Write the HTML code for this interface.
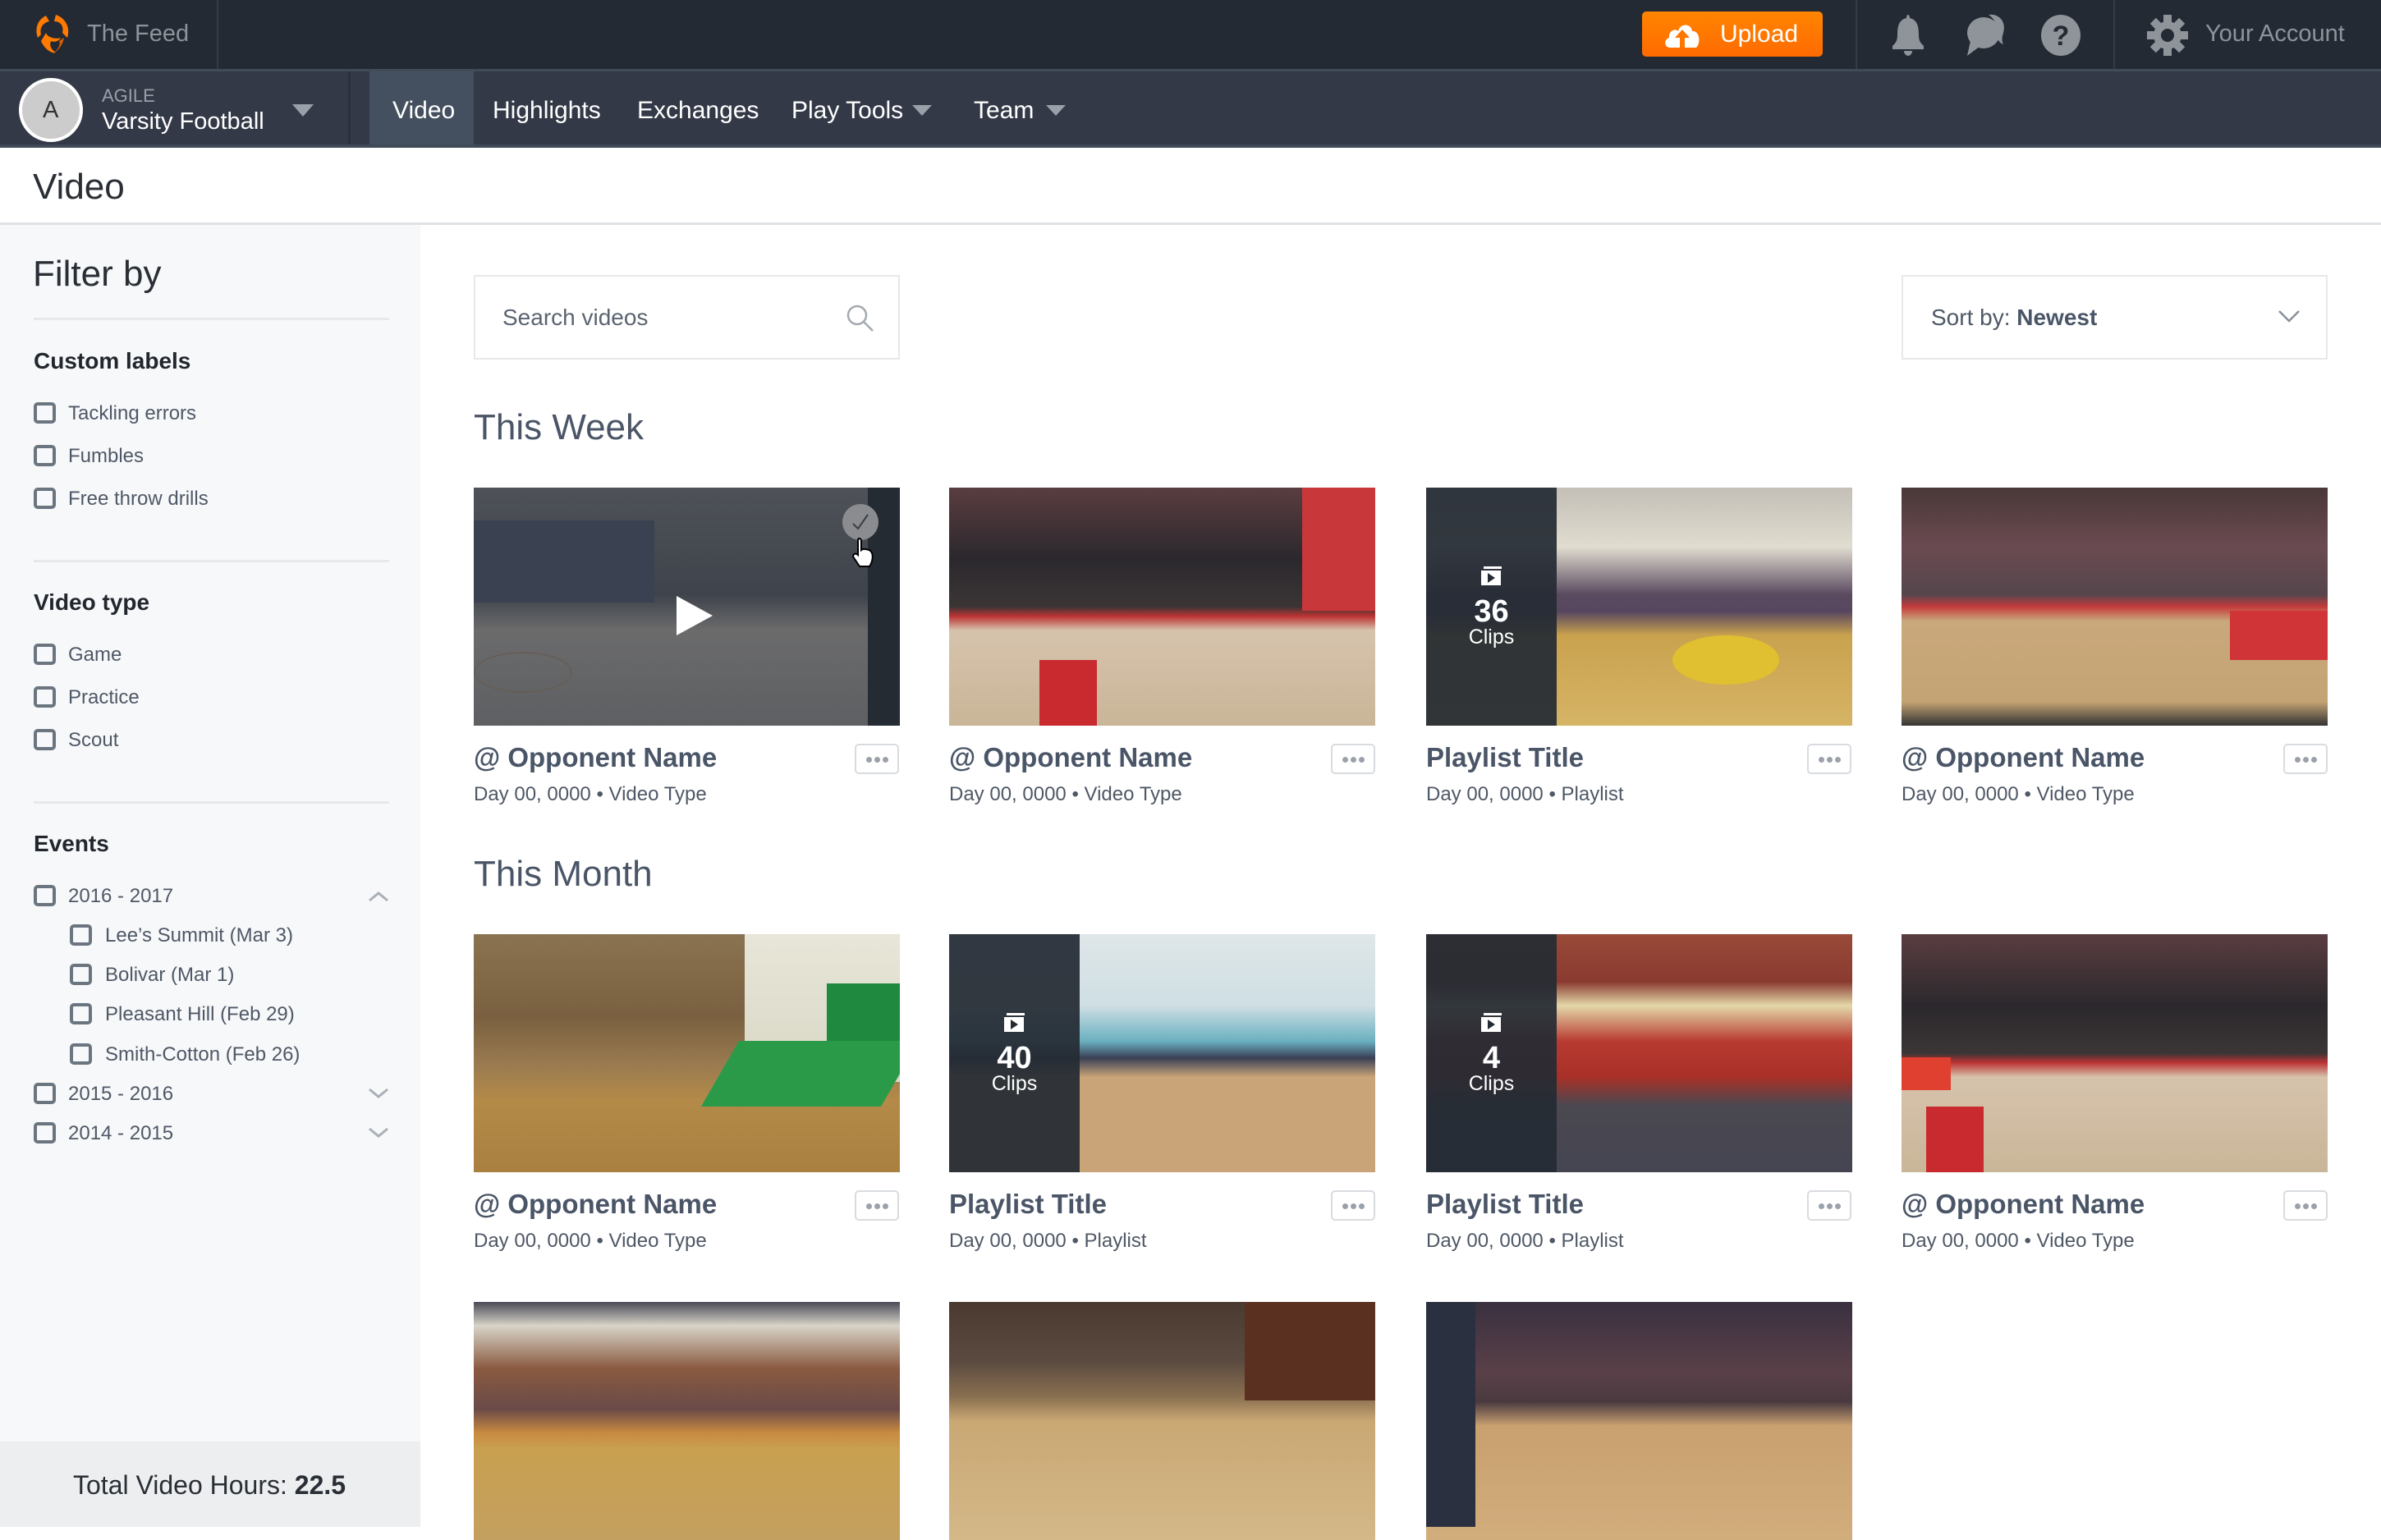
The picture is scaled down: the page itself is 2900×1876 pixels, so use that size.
<!DOCTYPE html>
<html><head><meta charset="utf-8">
<style>
*{margin:0;padding:0;box-sizing:border-box}
body{width:2900px;height:1860px;overflow:hidden;background:#fff;font-family:"Liberation Sans",Arial,sans-serif;position:relative}
.a{position:absolute}
.t{position:absolute;white-space:nowrap;line-height:1}
.top{left:0;top:0;width:2900px;height:84px;background:#242a33}
.nav{left:0;top:84px;width:2900px;height:96px;background:#333947;border-top:3px solid #414b58;border-bottom:4px solid #414b58}
.side{left:0;top:274px;width:512px;height:1586px;background:#f7f8fa}
.cb{position:absolute;width:27px;height:26px;border:4px solid #6b7580;border-radius:5px}
.lbl{font-size:24px;color:#4f5866}
.hr{position:absolute;left:41px;width:433px;height:3px;background:#e6e8eb}
.h{font-size:28px;font-weight:bold;color:#22272e}
.thumb{position:absolute;width:519px;height:290px;overflow:hidden}
.pl{position:absolute;left:0;top:0;width:159px;height:290px;background:rgba(37,43,52,.93);color:#fff;text-align:center}
.title{font-size:33px;font-weight:bold;color:#4a5567}
.sub{font-size:24px;color:#4f5866}
.dots{position:absolute;width:54px;height:37px;border:2px solid #d8dbdf;border-radius:5px;background:#fff}
.dots i{position:absolute;top:14px;width:7px;height:7px;border-radius:50%;background:#9aa1aa}
.sec{font-size:44px;color:#4a5567}
</style></head><body>

<div class="a top"></div>
<div class="a" style="left:264px;top:0;width:2px;height:84px;background:#343b46"></div>
<div class="a" style="left:2260px;top:0;width:2px;height:84px;background:#343b46"></div>
<div class="a" style="left:2574px;top:0;width:2px;height:84px;background:#343b46"></div>
<!-- logo -->
<svg class="a" style="left:38px;top:16px" width="52" height="52" viewBox="0 0 52 52">
<path d="M18 3 C8 8 4 18 8 30 L12 26 C10 18 14 12 22 10 Z" fill="#ff7a00"/>
<path d="M30 2 C42 6 48 18 44 30 L38 24 C40 16 36 10 28 10 Z" fill="#ff7a00"/>
<path d="M12 34 C16 44 26 50 30 48 C24 44 22 40 24 34 C28 36 34 34 36 30 C30 32 20 30 18 24 Z" fill="#ff7a00"/>
<path d="M40 30 C38 40 32 46 28 48 C34 42 36 38 34 34 Z" fill="#d85e00"/>
</svg>
<div class="t" style="left:106px;top:27px;font-size:29px;color:#8e939b">The Feed</div>

<!-- upload -->
<div class="a" style="left:2000px;top:14px;width:220px;height:55px;border-radius:5px;background:linear-gradient(#ff8500,#ff6a00)"></div>
<svg class="a" style="left:2026px;top:22px" width="46" height="38" viewBox="0 0 46 38">
<path d="M8 36 C1 36 0 26 7 24 C6 16 14 12 18 16 C20 6 34 6 35 16 C44 15 46 30 40 36 Z" fill="#fff"/>
<path d="M23 14 L14 24 H20 V36 H26 V24 H32 Z" fill="#ff7600"/>
</svg>
<div class="t" style="left:2095px;top:27px;font-size:30px;color:#fff">Upload</div>
<!-- bell -->
<svg class="a" style="left:2301px;top:16px" width="46" height="52" viewBox="0 0 46 52">
<path d="M23 2 C25 2 25 6 25 6 C34 8 36 16 36 26 C36 34 38 36 42 40 L42 44 H4 L4 40 C8 36 10 34 10 26 C10 16 12 8 21 6 C21 6 21 2 23 2 Z" fill="#8f949b"/>
<path d="M18 46 H28 C28 50 25 52 23 52 C21 52 18 50 18 46 Z" fill="#8f949b"/>
</svg>
<!-- chat -->
<svg class="a" style="left:2392px;top:16px" width="56" height="52" viewBox="0 0 56 52">
<path d="M30 2 C42 0 52 10 48 24 C46 30 46 34 48 38 C42 36 40 30 40 24 C42 14 36 6 30 2 Z" fill="#8f949b"/>
<ellipse cx="24" cy="24" rx="20" ry="19" fill="#8f949b"/>
<path d="M8 34 L4 52 L20 40 Z" fill="#8f949b"/>
</svg>
<!-- help -->
<svg class="a" style="left:2484px;top:17px" width="52" height="52" viewBox="0 0 52 52">
<ellipse cx="26" cy="26" rx="24" ry="25" fill="#8f949b"/>
<text x="26" y="38" text-anchor="middle" font-family="Liberation Sans" font-weight="bold" font-size="34" fill="#242a33">?</text>
</svg>
<!-- gear -->
<svg class="a" style="left:2614px;top:17px" width="52" height="52" viewBox="0 0 52 52">
<g fill="#8f949b">
<circle cx="26" cy="26" r="17"/>
<rect x="21" y="1" width="10" height="50"/>
<rect x="21" y="1" width="10" height="50" transform="rotate(45 26 26)"/>
<rect x="21" y="1" width="10" height="50" transform="rotate(90 26 26)"/>
<rect x="21" y="1" width="10" height="50" transform="rotate(135 26 26)"/>
</g>
<circle cx="26" cy="26" r="8" fill="#242a33"/>
</svg>
<div class="t" style="left:2686px;top:27px;font-size:29px;color:#8e939b">Your Account</div>

<!-- nav -->
<div class="a nav"></div>
<div class="a" style="left:424px;top:87px;width:3px;height:89px;background:#2a303b"></div>
<div class="a" style="left:450px;top:87px;width:127px;height:89px;background:#44505f"></div>
<div class="a" style="left:23px;top:95px;width:78px;height:78px;border-radius:50%;background:#ccc;border:4px solid #fff"></div>
<div class="t" style="left:52px;top:120px;font-size:29px;color:#333">A</div>
<div class="t" style="left:124px;top:106px;font-size:22px;color:#9aa0a8">AGILE</div>
<div class="t" style="left:124px;top:134px;font-size:29px;color:#fff">Varsity Football</div>
<svg class="a" style="left:356px;top:127px" width="26" height="16"><path d="M0 0H26L13 15Z" fill="#9aa0a8"/></svg>
<div class="t" style="left:478px;top:120px;font-size:30px;color:#fff">Video</div>
<div class="t" style="left:600px;top:120px;font-size:30px;color:#fff">Highlights</div>
<div class="t" style="left:776px;top:120px;font-size:30px;color:#fff">Exchanges</div>
<div class="t" style="left:964px;top:120px;font-size:30px;color:#fff">Play Tools</div>
<svg class="a" style="left:1111px;top:128px" width="24" height="14"><path d="M0 0H24L12 13Z" fill="#9aa0a8"/></svg>
<div class="t" style="left:1186px;top:120px;font-size:30px;color:#fff">Team</div>
<svg class="a" style="left:1274px;top:128px" width="24" height="14"><path d="M0 0H24L12 13Z" fill="#9aa0a8"/></svg>

<!-- page title -->
<div class="t" style="left:40px;top:206px;font-size:44px;color:#2a2f36">Video</div>
<div class="a" style="left:0;top:271px;width:2900px;height:3px;background:#dfe2e5"></div>

<!-- sidebar -->
<div class="a side"></div>
<div class="t" style="left:40px;top:312px;font-size:44px;color:#2a2f36">Filter by</div>
<div class="hr" style="top:387px"></div>
<div class="t h" style="left:41px;top:426px">Custom labels</div>
<div class="cb" style="left:41px;top:490px"></div><div class="t lbl" style="left:83px;top:492px">Tackling errors</div>
<div class="cb" style="left:41px;top:542px"></div><div class="t lbl" style="left:83px;top:544px">Fumbles</div>
<div class="cb" style="left:41px;top:594px"></div><div class="t lbl" style="left:83px;top:596px">Free throw drills</div>
<div class="hr" style="top:682px"></div>
<div class="t h" style="left:41px;top:720px">Video type</div>
<div class="cb" style="left:41px;top:784px"></div><div class="t lbl" style="left:83px;top:786px">Game</div>
<div class="cb" style="left:41px;top:836px"></div><div class="t lbl" style="left:83px;top:838px">Practice</div>
<div class="cb" style="left:41px;top:888px"></div><div class="t lbl" style="left:83px;top:890px">Scout</div>
<div class="hr" style="top:976px"></div>
<div class="t h" style="left:41px;top:1014px">Events</div>
<div class="cb" style="left:41px;top:1078px"></div><div class="t lbl" style="left:83px;top:1080px">2016 - 2017</div>
<div class="cb" style="left:85px;top:1126px"></div><div class="t lbl" style="left:128px;top:1128px">Lee’s Summit (Mar 3)</div>
<div class="cb" style="left:85px;top:1174px"></div><div class="t lbl" style="left:128px;top:1176px">Bolivar (Mar 1)</div>
<div class="cb" style="left:85px;top:1222px"></div><div class="t lbl" style="left:128px;top:1224px">Pleasant Hill (Feb 29)</div>
<div class="cb" style="left:85px;top:1271px"></div><div class="t lbl" style="left:128px;top:1273px">Smith-Cotton (Feb 26)</div>
<div class="cb" style="left:41px;top:1319px"></div><div class="t lbl" style="left:83px;top:1321px">2015 - 2016</div>
<div class="cb" style="left:41px;top:1367px"></div><div class="t lbl" style="left:83px;top:1369px">2014 - 2015</div>
<svg class="a" style="left:448px;top:1085px" width="26" height="14"><path d="M2 12L13 3L24 12" fill="none" stroke="#aab0b7" stroke-width="3"/></svg>
<svg class="a" style="left:448px;top:1325px" width="26" height="14"><path d="M2 2L13 11L24 2" fill="none" stroke="#aab0b7" stroke-width="3"/></svg>
<svg class="a" style="left:448px;top:1373px" width="26" height="14"><path d="M2 2L13 11L24 2" fill="none" stroke="#aab0b7" stroke-width="3"/></svg>
<div class="a" style="left:0;top:1756px;width:512px;height:104px;background:#edeef0"></div>
<div class="t" style="left:89px;top:1793px;font-size:32px;color:#2a2f36">Total Video Hours: <b>22.5</b></div>

<!-- search & sort -->
<div class="a" style="left:577px;top:335px;width:519px;height:103px;border:2px solid #e6e8eb"></div>
<div class="t" style="left:612px;top:373px;font-size:28px;color:#5b6470">Search videos</div>
<svg class="a" style="left:1030px;top:370px" width="36" height="36"><circle cx="14" cy="14" r="11" fill="none" stroke="#a3a9b0" stroke-width="2.5"/><path d="M22 22L33 33" stroke="#a3a9b0" stroke-width="2.5"/></svg>
<div class="a" style="left:2316px;top:335px;width:519px;height:103px;border:2px solid #e6e8eb"></div>
<div class="t" style="left:2352px;top:373px;font-size:28px;color:#4f5866">Sort by: <b style="color:#4a5567">Newest</b></div>
<svg class="a" style="left:2775px;top:378px" width="26" height="16"><path d="M1 1L13 13L25 1" fill="none" stroke="#8a9099" stroke-width="2.5"/></svg>

<div class="t sec" style="left:577px;top:499px">This Week</div>
<div class="t sec" style="left:577px;top:1043px">This Month</div>

<!-- Row 1 thumbs -->
<div class="thumb" style="left:577px;top:594px;background:linear-gradient(180deg,#4e5258 0%,#3f434b 45%,#6b6b6c 60%,#5d5f62 100%)">
 <div class="a" style="left:0;top:40px;width:220px;height:100px;background:#3a4150"></div>
 <div class="a" style="left:480px;top:0;width:39px;height:290px;background:#252b33"></div>
 <div class="a" style="left:0;top:200px;width:120px;height:50px;border-radius:50%;border:2px solid #665e58"></div>
 <svg class="a" style="left:245px;top:130px" width="48" height="52"><path d="M2 2L46 26L2 50Z" fill="#fff"/></svg>
 <div class="a" style="left:449px;top:20px;width:44px;height:44px;border-radius:50%;background:#8a8c90"></div>
 <svg class="a" style="left:460px;top:30px" width="22" height="24"><path d="M2 14L8 20L20 3" fill="none" stroke="#3a3d42" stroke-width="2"/></svg>
 <svg class="a" style="left:460px;top:60px" width="30" height="40"><path d="M9 2 C12 2 12 4 12 6 V16 C14 14 22 15 24 18 C27 22 26 30 22 36 H10 L2 24 C2 20 6 20 8 22 V4 C8 2 9 2 9 2Z" fill="#fff" stroke="#000" stroke-width="2"/></svg>
</div>
<div class="thumb" style="left:1156px;top:594px;background:linear-gradient(180deg,#5a3d40 0%,#2b282d 30%,#3b3535 50%,#b33 54%,#d6c3ac 60%,#c9b597 100%)">
 <div class="a" style="left:110px;top:210px;width:70px;height:80px;background:#c92a2f"></div>
 <div class="a" style="left:430px;top:0;width:89px;height:150px;background:#c8383b"></div>
</div>
<div class="thumb" style="left:1737px;top:594px;background:linear-gradient(180deg,#c4bfb7 0%,#e0dccf 25%,#5a4a60 45%,#574660 52%,#c9a24e 62%,#d6b466 100%)">
 <div class="a" style="left:300px;top:180px;width:130px;height:60px;border-radius:50%;background:#e0c030"></div>
 <div class="pl"><svg class="a" style="left:67px;top:96px" width="26" height="24"><rect x="3" y="0" width="22" height="3" fill="#fff"/><rect x="0" y="5" width="24" height="18" fill="#fff"/><path d="M8 8L17 14L8 20Z" fill="#252b33"/></svg><div class="t" style="left:0;width:159px;top:132px;font-size:38px;font-weight:bold">36</div><div class="t" style="left:0;width:159px;top:170px;font-size:25px">Clips</div></div>
</div>
<div class="thumb" style="left:2316px;top:594px;background:linear-gradient(180deg,#4a3838 0%,#6a4a50 25%,#55464c 45%,#c43a3b 50%,#c9a87c 56%,#c4a373 90%,#333 100%)">
 <div class="a" style="left:400px;top:150px;width:119px;height:60px;background:#d03436"></div>
</div>

<!-- Row 1 meta -->
<div class="t title" style="left:577px;top:906px">@ Opponent Name</div>
<div class="t sub" style="left:577px;top:956px">Day 00, 0000 • Video Type</div>
<div class="dots" style="left:1041px;top:906px"><i style="left:12px"></i><i style="left:22px"></i><i style="left:32px"></i></div>
<div class="t title" style="left:1156px;top:906px">@ Opponent Name</div>
<div class="t sub" style="left:1156px;top:956px">Day 00, 0000 • Video Type</div>
<div class="dots" style="left:1621px;top:906px"><i style="left:12px"></i><i style="left:22px"></i><i style="left:32px"></i></div>
<div class="t title" style="left:1737px;top:906px">Playlist Title</div>
<div class="t sub" style="left:1737px;top:956px">Day 00, 0000 • Playlist</div>
<div class="dots" style="left:2201px;top:906px"><i style="left:12px"></i><i style="left:22px"></i><i style="left:32px"></i></div>
<div class="t title" style="left:2316px;top:906px">@ Opponent Name</div>
<div class="t sub" style="left:2316px;top:956px">Day 00, 0000 • Video Type</div>
<div class="dots" style="left:2781px;top:906px"><i style="left:12px"></i><i style="left:22px"></i><i style="left:32px"></i></div>

<!-- Row 2 thumbs -->
<div class="thumb" style="left:577px;top:1138px;background:linear-gradient(180deg,#8a7350 0%,#7a6040 35%,#9a7b50 55%,#b48a48 70%,#a98040 100%)">
 <div class="a" style="left:330px;top:0;width:189px;height:180px;background:linear-gradient(180deg,#e8e6d8,#d8d6c4)"></div>
 <div class="a" style="left:430px;top:60px;width:89px;height:70px;background:#1f8a3f"></div>
 <div class="a" style="left:300px;top:130px;width:219px;height:80px;background:#2a9a48;transform:skewX(-30deg)"></div>
</div>
<div class="thumb" style="left:1156px;top:1138px;background:linear-gradient(180deg,#dfe6e8 0%,#cfdfe4 30%,#6ab0c0 45%,#3a3f55 52%,#c8a478 60%,#c9a478 100%)">
 <div class="pl"><svg class="a" style="left:67px;top:96px" width="26" height="24"><rect x="3" y="0" width="22" height="3" fill="#fff"/><rect x="0" y="5" width="24" height="18" fill="#fff"/><path d="M8 8L17 14L8 20Z" fill="#252b33"/></svg><div class="t" style="left:0;width:159px;top:132px;font-size:38px;font-weight:bold">40</div><div class="t" style="left:0;width:159px;top:170px;font-size:25px">Clips</div></div>
</div>
<div class="thumb" style="left:1737px;top:1138px;background:linear-gradient(180deg,#9a4a38 0%,#8a3a30 20%,#e4d8a8 30%,#b83a30 45%,#a83028 60%,#4a4850 72%,#454552 100%)">
 <div class="pl"><svg class="a" style="left:67px;top:96px" width="26" height="24"><rect x="3" y="0" width="22" height="3" fill="#fff"/><rect x="0" y="5" width="24" height="18" fill="#fff"/><path d="M8 8L17 14L8 20Z" fill="#252b33"/></svg><div class="t" style="left:0;width:159px;top:132px;font-size:38px;font-weight:bold">4</div><div class="t" style="left:0;width:159px;top:170px;font-size:25px">Clips</div></div>
</div>
<div class="thumb" style="left:2316px;top:1138px;background:linear-gradient(180deg,#5a3d40 0%,#2b282d 30%,#3b3535 50%,#b33 54%,#d6c3ac 60%,#c9b597 100%)">
 <div class="a" style="left:0;top:150px;width:60px;height:40px;background:#e04030"></div>
 <div class="a" style="left:30px;top:210px;width:70px;height:80px;background:#c92a2f"></div>
</div>

<!-- Row 2 meta -->
<div class="t title" style="left:577px;top:1450px">@ Opponent Name</div>
<div class="t sub" style="left:577px;top:1500px">Day 00, 0000 • Video Type</div>
<div class="dots" style="left:1041px;top:1450px"><i style="left:12px"></i><i style="left:22px"></i><i style="left:32px"></i></div>
<div class="t title" style="left:1156px;top:1450px">Playlist Title</div>
<div class="t sub" style="left:1156px;top:1500px">Day 00, 0000 • Playlist</div>
<div class="dots" style="left:1621px;top:1450px"><i style="left:12px"></i><i style="left:22px"></i><i style="left:32px"></i></div>
<div class="t title" style="left:1737px;top:1450px">Playlist Title</div>
<div class="t sub" style="left:1737px;top:1500px">Day 00, 0000 • Playlist</div>
<div class="dots" style="left:2201px;top:1450px"><i style="left:12px"></i><i style="left:22px"></i><i style="left:32px"></i></div>
<div class="t title" style="left:2316px;top:1450px">@ Opponent Name</div>
<div class="t sub" style="left:2316px;top:1500px">Day 00, 0000 • Video Type</div>
<div class="dots" style="left:2781px;top:1450px"><i style="left:12px"></i><i style="left:22px"></i><i style="left:32px"></i></div>

<!-- Row 3 thumbs -->
<div class="thumb" style="left:577px;top:1586px;background:linear-gradient(180deg,#4a4a58 0%,#d8d4c8 10%,#8a5a40 28%,#6a4a48 45%,#c98a40 55%,#c9a050 62%,#c4a060 100%)"></div>
<div class="thumb" style="left:1156px;top:1586px;background:linear-gradient(180deg,#4a3a30 0%,#5a4a40 25%,#8a7050 40%,#c9a874 50%,#d4b888 100%)">
 <div class="a" style="left:360px;top:0;width:159px;height:120px;background:#5a3020"></div>
</div>
<div class="thumb" style="left:1737px;top:1586px;background:linear-gradient(180deg,#3a3040 0%,#5a4048 30%,#4a3a40 42%,#c9a070 52%,#d2ad7c 100%)">
 <div class="a" style="left:0;top:0;width:60px;height:274px;background:#2a3040"></div>
</div>

</body></html>
